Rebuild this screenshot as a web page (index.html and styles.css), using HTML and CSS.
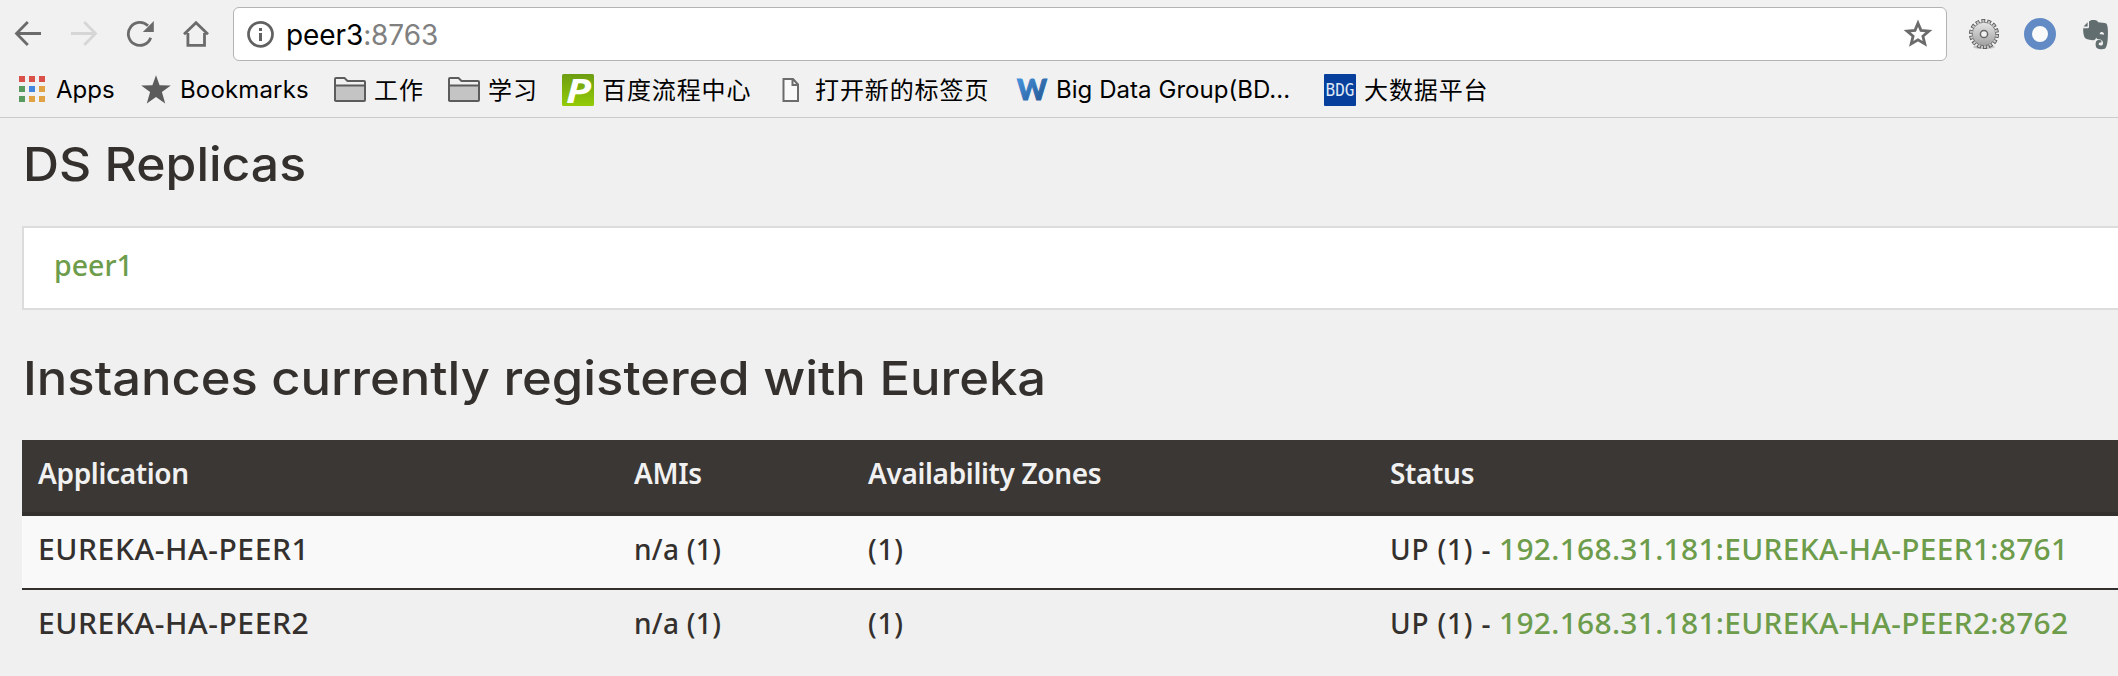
FILE: index.html
```html
<!DOCTYPE html>
<html lang="en">
<head>
<meta charset="utf-8">
<title>Eureka</title>
<link rel="stylesheet" href="styles.css">
</head>
<body>
<header class="chrome">
  <div class="toolbar">
    <div class="nav">
      <svg class="nav-icon" viewBox="0 0 28 28"><path d="M27 13.5H2.8M13.8 2 2.5 13.5 13.8 25"/></svg>
      <svg class="nav-icon nav-icon-off" viewBox="0 0 28 28"><path d="M1 13.5h24.2M14.2 2l11.3 11.5L14.2 25"/></svg>
      <svg class="nav-icon" viewBox="0 0 28 28"><path d="M24.7 17.7A11.5 11.5 0 1 1 22 5.8"/><path class="solid" d="M27.8 1v11H16.8z"/></svg>
      <svg class="nav-icon" viewBox="0 0 28 28"><path d="M2 14.3 14 2.8l12 11.5M5.9 13v12.4h16.6V13"/></svg>
    </div>
    <div class="omnibox">
      <svg class="info" viewBox="0 0 28 28"><circle cx="13.5" cy="14.3" r="12"/><path class="solid" d="M12 8h3v3h-3zM12 13h3v8h-3z"/></svg>
      <div class="url"><span class="host">peer3</span><span class="port">:8763</span></div>
      <svg class="fav" viewBox="0 0 30 30"><path d="M15 4.2l3 7.2 7.9.7-6 5.1 1.9 7.7-6.8-4.1-6.8 4.1 1.9-7.7-6-5.1 7.9-.7z"/></svg>
    </div>
    <div class="extensions">
      <svg class="ext" viewBox="0 0 32 32">
        <defs><linearGradient id="metal" x1="0" y1="0" x2="0" y2="1"><stop offset="0" stop-color="#e6e6e6"/><stop offset="1" stop-color="#a0a0a0"/></linearGradient></defs>
        <ellipse cx="16" cy="29" rx="11" ry="2" fill="#c4c4c4"/>
        <circle cx="16" cy="16" r="13" fill="none" stroke="#555" stroke-width="4" stroke-dasharray="3.8 2.034"/>
        <circle cx="16" cy="16" r="11.8" fill="url(#metal)" stroke="#666" stroke-width=".8"/>
        <circle cx="16" cy="16" r="12.8" fill="none" stroke="#c6c6c6" stroke-width="2.8" stroke-dasharray="2.1 3.645" stroke-dashoffset="-.8"/>
        <circle cx="16" cy="16" r="3.6" fill="#f1f1f1" stroke="#666" stroke-width="1.5"/>
      </svg>
      <svg class="ext" viewBox="0 0 32 32"><circle cx="16" cy="16" r="12" fill="#fafafa" stroke="#628bc5" stroke-width="8"/></svg>
      <svg class="ext" viewBox="0 0 32 32"><path fill="#616d6e" d="M3.2 10.2h4.6c.8 0 1.2-.5 1.2-1.2V3.6C10 2 12 1.7 14.5 2c2 .2 3.2.9 3.5 2.2 3 .3 6.5.3 8.2 1.3 1.8 1.5 2 8 1.6 14.500-.3 5-1.2 9.8-3 10.7-2.3.9-6.5.5-8-.8-1.6-1.5-1.7-6.5.6-7.600 1.2-.6 3.2-.5 4 .1v2.2c-1.6-.1-2.7.2-2.7 1.4s1 1.5 2.4 1.4c1.5-.1 2-1 1.9-2.7-.1-2.5-1.6-3.3-4.7-3.5-1.3-.1-1.8-.8-2-1.7-.6 1.7-1.6 3-3.8 2.7-4-.5-7-1.2-8-3-.9-2-1.5-5.8-1.3-9z"/><path fill="#616d6e" d="M3.6 8.6 7.6 4.3v4.3z"/><path fill="#f1f1f1" d="M19.6 16.3c.3-1.7 1.2-2.3 2.4-2.2 1.2.1 2 1 2.1 2.6-1.5-.6-3-.7-4.5-.4z"/></svg>
    </div>
  </div>
  <nav class="bookmarks">
    <a class="bookmark"><svg class="mark" viewBox="0 0 32 32"><path fill="#d95148" d="M2 2h6v6H2zM12 2h6v6h-6zM22 2h6v6h-6z"/><path fill="#599b5e" d="M2 12h6v6H2zM2 22h6v6H2z"/><path fill="#4386e0" d="M12 12h6v6h-6z"/><path fill="#e0a243" d="M22 12h6v6h-6zM12 22h6v6h-6zM22 22h6v6h-6z"/></svg><span class="label apps">Apps</span></a>
    <a class="bookmark"><svg class="mark" viewBox="0 0 32 32"><path fill="#5b5b5b" d="M16 1.3l3.6 9.9 11.2.3-8.9 6.6 3.3 11.4-9.2-6.6-9.2 6.6 3.3-11.4L1.2 11.500l11.2-.3z"/></svg><span class="label">Bookmarks</span></a>
    <a class="bookmark"><svg class="mark" viewBox="0 0 32 32"><path class="folder-back" d="M1 27V5q0-1 1-1h8.5l3 3H30q1 0 1 1v5"/><path class="folder" d="M1 11.5h30V26q0 1-1 1H2q-1 0-1-1z"/></svg><span class="label cjk">工作</span></a>
    <a class="bookmark"><svg class="mark" viewBox="0 0 32 32"><path class="folder-back" d="M1 27V5q0-1 1-1h8.5l3 3H30q1 0 1 1v5"/><path class="folder" d="M1 11.5h30V26q0 1-1 1H2q-1 0-1-1z"/></svg><span class="label cjk">学习</span></a>
    <a class="bookmark"><svg class="mark" viewBox="0 0 32 32"><defs><linearGradient id="lime" x1="0" y1="0" x2="0" y2="1"><stop offset="0" stop-color="#6d9d12"/><stop offset="1" stop-color="#94cb08"/></linearGradient></defs><rect width="32" height="32" rx="1.5" fill="url(#lime)"/><text class="logo-p" x="4" y="29" textLength="25" lengthAdjust="spacingAndGlyphs">P</text></svg><span class="label cjk">百度流程中心</span></a>
    <a class="bookmark"><svg class="mark" viewBox="0 0 32 32"><path fill="#fafafa" stroke="#6c6c6c" stroke-width="2" d="M8.5 5H18l5 5.5V27H8.5zM17.5 5v6H23"/></svg><span class="label cjk">打开新的标签页</span></a>
    <a class="bookmark"><svg class="mark" viewBox="0 0 32 32"><defs><linearGradient id="sky" x1="0" y1="0" x2="1" y2="1"><stop offset="0" stop-color="#4a9ae6"/><stop offset="1" stop-color="#1f4f88"/></linearGradient></defs><text class="logo-w" x="1" y="26" textLength="30" lengthAdjust="spacingAndGlyphs">W</text></svg><span class="label group">Big Data Group(BD...</span></a>
    <a class="bookmark"><svg class="mark" viewBox="0 0 32 32"><rect width="32" height="32" rx="1" fill="#06409c"/><text class="logo-bdg" x="1.5" y="22" textLength="29" lengthAdjust="spacingAndGlyphs">BDG</text></svg><span class="label cjk">大数据平台</span></a>
  </nav>
</header>
<main class="page">
  <h2 class="title title-replicas">DS Replicas</h2>
  <div class="replicas"><a class="link peer">peer1</a></div>
  <h2 class="title title-instances">Instances currently registered with Eureka</h2>
  <table class="instances">
    <colgroup><col class="col-app"><col class="col-ami"><col class="col-zone"><col></colgroup>
    <thead>
      <tr><th>Application</th><th>AMIs</th><th>Availability Zones</th><th>Status</th></tr>
    </thead>
    <tbody>
      <tr><td><span class="name">EUREKA-HA-PEER1</span></td><td class="ami">n/a (1)</td><td>(1)</td><td>UP (1) - <a class="link">192.168.31.181:EUREKA-HA-PEER1:8761</a></td></tr>
      <tr><td><span class="name">EUREKA-HA-PEER2</span></td><td class="ami">n/a (1)</td><td>(1)</td><td>UP (1) - <a class="link">192.168.31.181:EUREKA-HA-PEER2:8762</a></td></tr>
    </tbody>
  </table>
</main>
</body>
</html>
```
FILE: styles.css
```css
* { box-sizing: border-box; }
body {
  margin: 0;
  height: 676px;
  overflow: hidden;
  background: #f0f0f0;
  color: #34302d;
  font: 500 28px/40px "Noto Sans", sans-serif;
}
svg { display: block; flex: none; }

/* Browser chrome */
.chrome {
  height: 118px;
  background: #f1f1f1;
  border-bottom: 1px solid #cbcbcb;
}
.toolbar {
  display: flex;
  align-items: center;
  height: 68px;
  padding-left: 14px;
}
.nav { display: flex; gap: 28px; }
.nav-icon {
  width: 28px;
  height: 28px;
  fill: none;
  stroke: #6b6b6b;
  stroke-width: 2.8;
}
.nav-icon-off { stroke: #d6d6d6; }
.nav-icon .solid { fill: #6b6b6b; stroke: none; }
.omnibox {
  display: flex;
  align-items: center;
  width: 1714px;
  height: 54px;
  margin-left: 23px;
  padding: 0 13px;
  background: #fff;
  border: 1px solid #b3b3b3;
  border-radius: 6px;
}
.info {
  width: 28px;
  height: 28px;
  fill: none;
  stroke: #616161;
  stroke-width: 2.7;
}
.info .solid { fill: #616161; stroke: none; }
.url {
  flex: 1;
  margin: 2px 0 0 11px;
  font: 400 28px/40px Inter, sans-serif;
  letter-spacing: -0.1px;
}
.host { color: #000; }
.port { color: #808080; }
.fav {
  width: 30px;
  height: 30px;
  fill: none;
  stroke: #6b6b6b;
  stroke-width: 2.8;
}
.extensions { display: flex; gap: 24px; margin-left: 21px; }
.ext { width: 32px; height: 32px; }

.bookmarks {
  display: grid;
  grid-template-columns: 123px 194px 114px 114px 213px 241px 308px auto;
  height: 42px;
  padding-left: 17px;
}
.bookmark { display: flex; align-items: center; gap: 8px; }
.mark { width: 32px; height: 32px; }
.label {
  color: #000;
  font: 400 24px/42px Inter, "Noto Sans CJK SC", sans-serif;
  letter-spacing: 0.16px;
  white-space: nowrap;
}
.apps { margin-left: -1px; letter-spacing: 0; }
.group { letter-spacing: 0.05px; }
.cjk {
  padding-bottom: 2px;
  font-family: "Noto Sans CJK SC", sans-serif;
  letter-spacing: 0.9px;
}
.folder-back { fill: #f1f1f1; stroke: #5c5c5c; stroke-width: 2; }
.folder { fill: #c4c4c4; stroke: #5c5c5c; stroke-width: 2; }
.logo-p { fill: #fff; font: italic 700 34px "Open Sans", sans-serif; }
.logo-w { fill: url(#sky); stroke: url(#sky); font: 900 28px Lato, sans-serif; }
.logo-bdg { fill: #dfe8f6; font: 400 18px "DejaVu Sans Mono", monospace; }

/* Eureka page */
.page { padding-left: 22px; }
.title {
  width: fit-content;
  margin: 0 0 0 1px;
  font: 500 47px/48px Inter, sans-serif;
  transform-origin: 0 0;
}
.title-replicas {
  padding-top: 22px;
  margin-bottom: 38px;
  transform: scaleX(1.062);
}
.title-instances {
  padding-top: 44px;
  margin-bottom: 38px;
  transform: scaleX(1.079);
}
.link {
  display: inline-block;
  color: #6d9c4b;
  letter-spacing: 0.3px;
  transform: scaleX(1.067);
  transform-origin: 0 0;
}
.replicas {
  height: 84px;
  padding: 17px 30px;
  background: #fff;
  border: 2px solid #dcdcdc;
  border-right: 0;
}
.peer { letter-spacing: 0; transform: scaleX(1.02); }
.instances {
  width: 100%;
  table-layout: fixed;
  border-collapse: separate;
  border-spacing: 0;
}
.col-app { width: 596px; }
.col-ami { width: 234px; }
.col-zone { width: 522px; }
.instances th, .instances td {
  height: 74px;
  padding: 13px 16px 0;
  text-align: left;
  vertical-align: top;
  white-space: nowrap;
}
.instances th {
  height: 76px;
  background: #3b3734;
  border-bottom: 4px solid #34302d;
  color: #f1f1f1;
  font-weight: 600;
  letter-spacing: -0.35px;
}
.instances td {
  letter-spacing: 0.8px;
  border-bottom: 2px solid #34302d;
}
.instances .ami { letter-spacing: 0.3px; }
.name {
  display: inline-block;
  letter-spacing: 0.5px;
  transform: scaleX(1.075);
  transform-origin: 0 0;
}
.instances tbody tr:first-child td { background: #f9f9f9; }
.instances tbody tr:last-child td { border-bottom: 0; }
```
